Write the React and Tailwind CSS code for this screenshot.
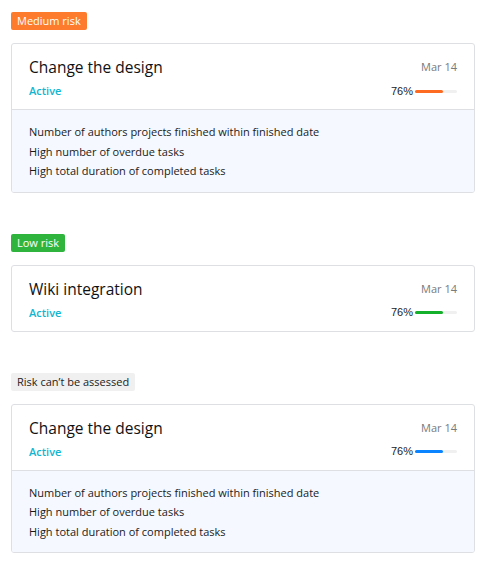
const reasons = [
  'Number of authors projects finished within finished date',
  'High number of overdue tasks',
  'High total duration of completed tasks',
]

const ProjectCard = ({ title, barColor, showReasons }) => (
  <div className="border border-[#dedfe3] rounded-[3px] bg-white overflow-hidden">
    <div className="flex justify-between px-[17px] pt-[12px] pb-[10px]">
      <div className="flex flex-col">
        <h2 className="text-[15.5px] leading-[22px] text-[#111114]">{title}</h2>
        <span className="mt-[5px] text-[11px] leading-[16px] text-[#12b5d0] font-semibold">Active</span>
      </div>
      <div className="flex flex-col items-end">
        <span className="mt-[3px] text-[11px] leading-[16px] text-[#7a7a7a]">Mar 14</span>
        <div className="mt-[8px] flex items-center gap-[2px] h-[16px]">
          <span className="text-[11px] text-[#222] font-['Liberation_Sans',sans-serif]">76%</span>
          <div className="w-[42px] h-[3px] rounded-full bg-[#f0f0f0]">
            <div className={`w-[28px] h-[3px] rounded-full ${barColor}`} />
          </div>
        </div>
      </div>
    </div>
    {showReasons && (
      <div className="border-t border-[#dedfe3] bg-[#f5f8fe] px-[17px] pt-[12px] pb-[11px]">
        {reasons.map((r) => (
          <p key={r} className="text-[11px] leading-[19.5px] text-[#1a1a1a] font-medium">
            {r}
          </p>
        ))}
      </div>
    )}
  </div>
)

const Badge = ({ label, className }) => (
  <div className="flex">
    <span className={`px-[6px] text-[11px] leading-[18px] rounded-[2px] ${className}`}>
      {label}
    </span>
  </div>
)

export default function App() {
  return (
    <div className="min-h-screen bg-white px-[11px] pt-[12px] font-['Open_Sans',sans-serif]">
      <div>
        <Badge label="Medium risk" className="bg-[#fd7b2c] text-white" />
        <div className="mt-[13px]">
          <ProjectCard title="Change the design" barColor="bg-[#fd6b22]" showReasons />
        </div>
      </div>
      <div className="mt-[41px]">
        <Badge label="Low risk" className="bg-[#2fb53e] text-white" />
        <div className="mt-[13px]">
          <ProjectCard title="Wiki integration" barColor="bg-[#14b02b]" />
        </div>
      </div>
      <div className="mt-[41px]">
        <Badge label="Risk can’t be assessed" className="bg-[#f0f0f0] text-[#222]" />
        <div className="mt-[13px]">
          <ProjectCard title="Change the design" barColor="bg-[#0a84ff]" showReasons />
        </div>
      </div>
    </div>
  )
}
